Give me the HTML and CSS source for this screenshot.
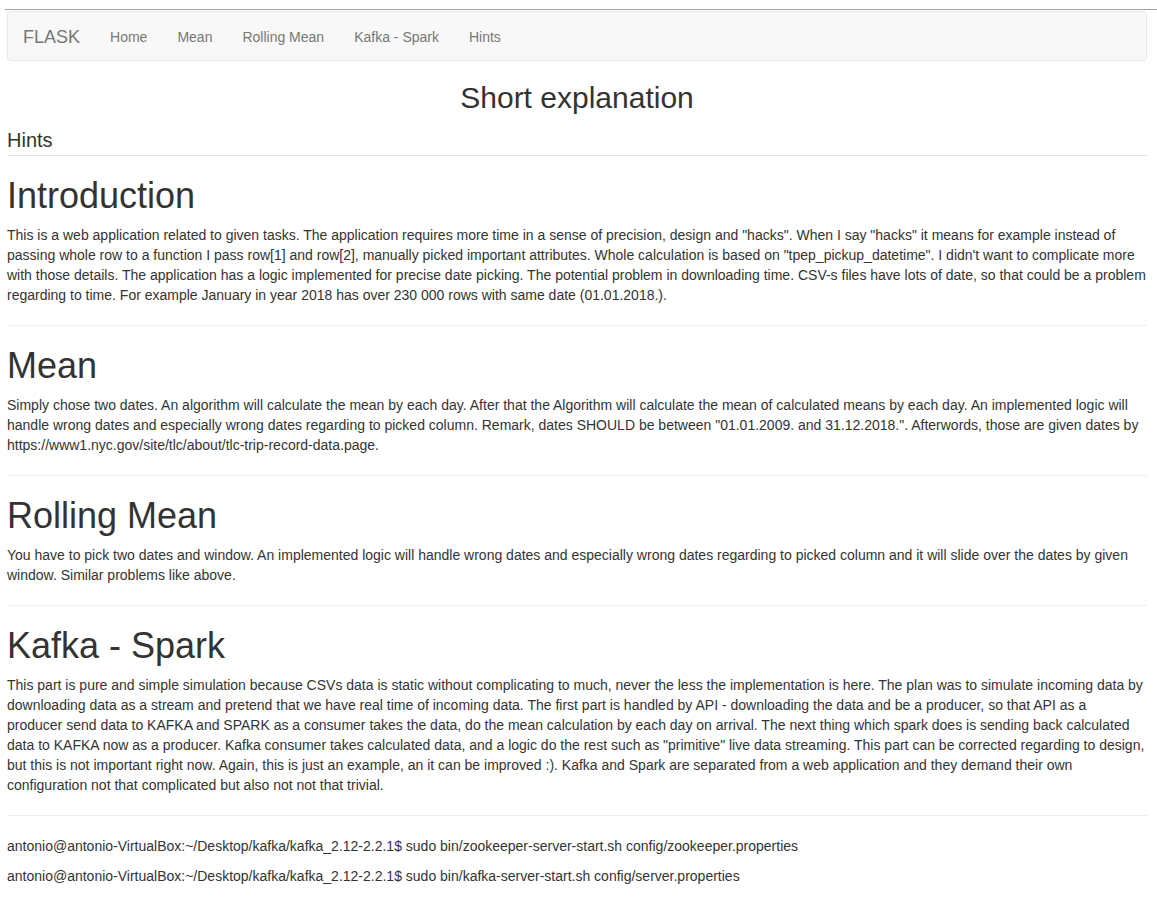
FILE: index.html
```html
<!DOCTYPE html>
<html lang="en">
<head>
<meta charset="utf-8">
<title>Short explanation</title>
<link rel="stylesheet" href="styles.css">
</head>
<body>
<div class="topline"></div>
<div class="page">
  <nav class="navbar">
    <a class="brand" href="#">FLASK</a>
    <ul class="nav">
      <li><a href="#">Home</a></li>
      <li><a href="#">Mean</a></li>
      <li><a href="#">Rolling Mean</a></li>
      <li><a href="#">Kafka - Spark</a></li>
      <li><a href="#">Hints</a></li>
    </ul>
  </nav>

  <h2 class="title">Short explanation</h2>
  <div class="legend">Hints</div>

  <h1 class="section-title">Introduction</h1>
  <p>This is a web application related to given tasks. The application requires more time in a sense of precision, design and "hacks". When I say "hacks" it means for example instead of passing whole row to a function I pass row[1] and row[2], manually picked important attributes. Whole calculation is based on "tpep_pickup_datetime". I didn't want to complicate more with those details. The application has a logic implemented for precise date picking. The potential problem in downloading time. CSV-s files have lots of date, so that could be a problem regarding to time. For example January in year 2018 has over 230 000 rows with same date (01.01.2018.).</p>
  <hr>

  <h1 class="section-title">Mean</h1>
  <p>Simply chose two dates. An algorithm will calculate the mean by each day. After that the Algorithm will calculate the mean of calculated means by each day. An implemented logic will handle wrong dates and especially wrong dates regarding to picked column. Remark, dates SHOULD be between "01.01.2009. and 31.12.2018.". Afterwords, those are given dates by https://www1.nyc.gov/site/tlc/about/tlc-trip-record-data.page.</p>
  <hr>

  <h1 class="section-title">Rolling Mean</h1>
  <p>You have to pick two dates and window. An implemented logic will handle wrong dates and especially wrong dates regarding to picked column and it will slide over the dates by given window. Similar problems like above.</p>
  <hr>

  <h1 class="section-title">Kafka - Spark</h1>
  <p>This part is pure and simple simulation because CSVs data is static without complicating to much, never the less the implementation is here. The plan was to simulate incoming data by downloading data as a stream and pretend that we have real time of incoming data. The first part is handled by API - downloading the data and be a producer, so that API as a<br>producer send data to KAFKA and SPARK as a consumer takes the data, do the mean calculation by each day on arrival. The next thing which spark does is sending back calculated data to KAFKA now as a producer. Kafka consumer takes calculated data, and a logic do the rest such as "primitive" live data streaming. This part can be corrected regarding to design, but this is not important right now. Again, this is just an example, an it can be improved :). Kafka and Spark are separated from a web application and they demand their own configuration not that complicated but also not not that trivial.</p>
  <hr>

  <p class="cmd">antonio@antonio-VirtualBox:~/Desktop/kafka/kafka_2.12-2.2.1$ sudo bin/zookeeper-server-start.sh config/zookeeper.properties</p>
  <p class="cmd">antonio@antonio-VirtualBox:~/Desktop/kafka/kafka_2.12-2.2.1$ sudo bin/kafka-server-start.sh config/server.properties</p>
</div>
</body>
</html>
```

FILE: styles.css
```css
* { box-sizing: border-box; }

html, body {
  margin: 0;
  padding: 0;
  background: #fff;
}

body {
  font-family: "Liberation Sans", Arial, sans-serif;
  font-size: 14px;
  line-height: 20px;
  color: #333;
}

.topline {
  margin-left: 5px;
  height: 10px;
  border-bottom: 1px solid #a3a3a3;
}

.page {
  margin: 1px 10px 0 7px;
}

.navbar {
  display: flex;
  align-items: flex-start;
  height: 50px;
  background: #f8f8f8;
  border: 1px solid #e7e7e7;
  border-radius: 4px;
  margin-bottom: 20px;
}

.brand {
  display: block;
  padding: 15px;
  font-size: 18px;
  line-height: 20px;
  color: #777;
  text-decoration: none;
}

.nav {
  display: flex;
  list-style: none;
  margin: 0;
  padding: 0;
}

.nav a {
  display: block;
  padding: 15px;
  font-size: 14px;
  line-height: 20px;
  color: #777;
  text-decoration: none;
}

.title {
  margin: 20px 0 16px;
  font-size: 30px;
  line-height: 33px;
  font-weight: normal;
  text-align: center;
  color: #333;
}

.legend {
  font-size: 20px;
  line-height: 20px;
  padding-bottom: 5px;
  border-bottom: 1px solid #e5e5e5;
  color: #333;
}

.section-title {
  margin: 20px 0 10px;
  font-size: 36px;
  line-height: 39px;
  font-weight: normal;
  color: #333;
}

p {
  margin: 0 0 10px;
}

hr {
  margin: 20px 0;
  border: 0;
  border-top: 1px solid #eee;
  height: 0;
}
```
